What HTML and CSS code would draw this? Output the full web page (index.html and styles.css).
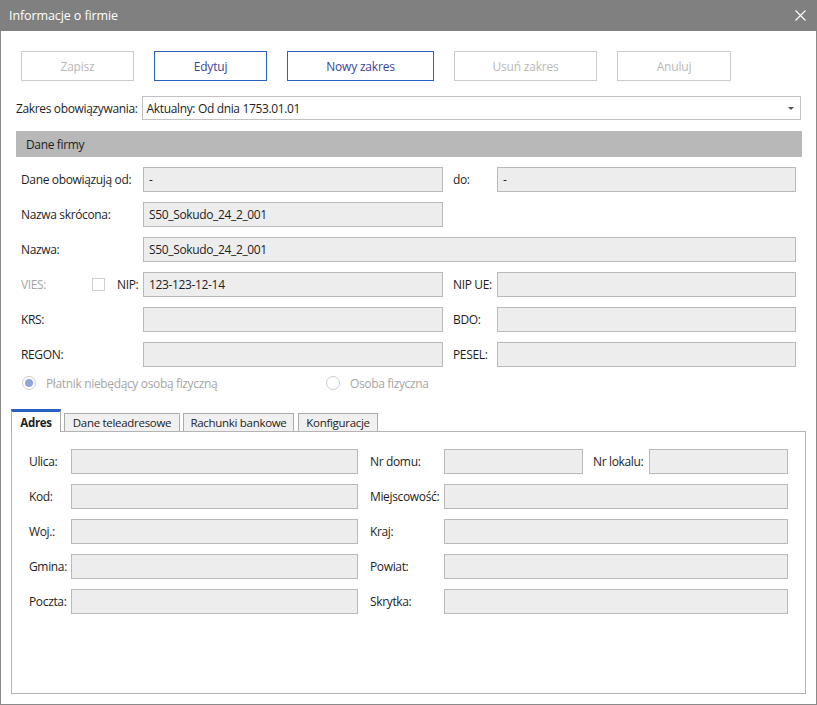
FILE: index.html
```html
<!DOCTYPE html>
<html lang="pl">
<head>
<meta charset="utf-8">
<title>Informacje o firmie</title>
<link rel="stylesheet" href="styles.css">
</head>
<body>
<div class="window">
  <div class="titlebar">
    <span class="title">Informacje o firmie</span>
    <svg class="close" width="11" height="11" viewBox="0 0 11 11"><path d="M0.5 0.5 L10.5 10.5 M10.5 0.5 L0.5 10.5" stroke="#fff" stroke-width="1.1" fill="none"/></svg>
  </div>
  <div class="content">
    <div class="toolbar">
      <button class="btn disabled w113">Zapisz</button>
      <button class="btn active w113">Edytuj</button>
      <button class="btn active w147">Nowy zakres</button>
      <button class="btn disabled w143">Usuń zakres</button>
      <button class="btn disabled w114">Anuluj</button>
    </div>
    <div class="range-row">
      <span class="label">Zakres obowiązywania:</span>
      <div class="select">
        <span>Aktualny: Od dnia 1753.01.01</span>
        <svg class="arrow" width="6" height="3" viewBox="0 0 6 3"><path d="M0 0 H6 L3 3 Z" fill="#505050"/></svg>
      </div>
    </div>
    <div class="section">Dane firmy</div>
    <div class="form">
      <span class="label">Dane obowiązują od:</span>
      <div class="field">-</div>
      <span class="label l2">do:</span>
      <div class="field">-</div>

      <span class="label">Nazwa skrócona:</span>
      <div class="field">S50_Sokudo_24_2_001</div>
      <span></span><span></span>

      <span class="label">Nazwa:</span>
      <div class="field span3">S50_Sokudo_24_2_001</div>

      <div class="nip-cell">
        <span class="label dim vies">VIES:</span>
        <span class="checkbox"></span>
        <span class="label">NIP:</span>
      </div>
      <div class="field">123-123-12-14</div>
      <span class="label l2">NIP UE:</span>
      <div class="field"></div>

      <span class="label">KRS:</span>
      <div class="field"></div>
      <span class="label l2">BDO:</span>
      <div class="field"></div>

      <span class="label">REGON:</span>
      <div class="field"></div>
      <span class="label l2">PESEL:</span>
      <div class="field"></div>
    </div>
    <div class="radios">
      <div class="radio-item first"><span class="radio checked"></span><span class="dim">Płatnik niebędący osobą fizyczną</span></div>
      <div class="radio-item"><span class="radio"></span><span class="dim">Osoba fizyczna</span></div>
    </div>
    <div class="tabs">
      <div class="tab selected">Adres</div>
      <div class="tab t1">Dane teleadresowe</div>
      <div class="tab t2">Rachunki bankowe</div>
      <div class="tab t3">Konfiguracje</div>
    </div>
    <div class="panel">
      <div class="addr">
        <span class="label">Ulica:</span>
        <div class="field"></div>
        <span class="label a2">Nr domu:</span>
        <div class="field"></div>
        <span class="label a3">Nr lokalu:</span>
        <div class="field"></div>

        <span class="label">Kod:</span>
        <div class="field"></div>
        <span class="label a2">Miejscowość:</span>
        <div class="field span3"></div>

        <span class="label">Woj.:</span>
        <div class="field"></div>
        <span class="label a2">Kraj:</span>
        <div class="field span3"></div>

        <span class="label">Gmina:</span>
        <div class="field"></div>
        <span class="label a2">Powiat:</span>
        <div class="field span3"></div>

        <span class="label">Poczta:</span>
        <div class="field"></div>
        <span class="label a2">Skrytka:</span>
        <div class="field span3"></div>
      </div>
    </div>
  </div>
</div>
</body>
</html>
```
FILE: styles.css
```css
* { box-sizing: border-box; }
html, body { margin: 0; padding: 0; background: #fff; }
body {
  font-family: "Open Sans", "Noto Sans", "Liberation Sans", sans-serif;
  font-size: 12px;
  letter-spacing: -0.35px;
  color: #1e1e1e;
}
.window {
  width: 817px;
  height: 705px;
  display: flex;
  flex-direction: column;
}
.titlebar {
  height: 31px;
  background: #808080;
  display: flex;
  align-items: center;
  justify-content: space-between;
  padding: 0 11px 0 9px;
  flex: none;
}
.title { color: #fff; font-size: 12.5px; letter-spacing: -0.1px; }
.close { display: block; margin-top: 0; }
.content {
  flex: 1;
  border: 1px solid #8a8a8a;
  border-top: none;
  display: flex;
  flex-direction: column;
}
.toolbar {
  display: flex;
  gap: 20px;
  margin: 20px 0 0 20px;
}
.btn {
  height: 30px;
  background: #fff;
  font-family: inherit;
  font-size: 12px;
  letter-spacing: -0.2px;
  padding: 0;
  border: 1px solid #c8c8c8;
}
.btn.disabled { color: #b8b8b8; border-color: #cbcbcb; }
.btn.active { color: #3d4494; border-color: #2a5fc4; }
.w113 { width: 113px; }
.w114 { width: 114px; }
.w143 { width: 143px; }
.w147 { width: 147px; }

.range-row {
  display: flex;
  align-items: center;
  margin: 15px 15px 0 15px;
  gap: 4px;
}
.select {
  flex: 1;
  height: 24px;
  border: 1px solid #c2c2c2;
  display: flex;
  align-items: center;
  justify-content: space-between;
  padding: 0 6px 0 4px;
}
.arrow { display: block; }

.section {
  margin: 11px 14px 0 15px;
  height: 26px;
  background: #b8b8b8;
  padding-left: 10px;
  display: flex;
  align-items: center;
}

.label { white-space: nowrap; }
.dim { color: #a6a6a6; }

.form {
  display: grid;
  grid-template-columns: 122px 300px 54px 299px;
  grid-auto-rows: 25px;
  row-gap: 10px;
  margin: 10px 0 0 20px;
  align-items: center;
}
.form .l2 { padding-left: 10px; }
.field {
  height: 25px;
  background: #ededed;
  border: 1px solid #b9b9b9;
  padding-left: 5px;
  display: flex;
  align-items: center;
}
.span3 { grid-column: span 3; }
.nip-cell {
  display: flex;
  align-items: center;
}
.vies { width: 71px; }
.checkbox {
  width: 13px;
  height: 13px;
  border: 1px solid #cfcfcf;
  margin-right: 12px;
}

.radios {
  display: flex;
  align-items: center;
  height: 20px;
  margin: 6px 0 0 21px;
}
.radio-item { display: flex; align-items: center; gap: 10px; }
.radio-item.first { width: 304px; }
.radio {
  width: 14px;
  height: 14px;
  border-radius: 50%;
  border: 1px solid #cdcdcd;
  display: flex;
  align-items: center;
  justify-content: center;
}
.radio.checked::after {
  content: "";
  width: 8px;
  height: 8px;
  border-radius: 50%;
  background: #8ea6e0;
}

.tabs {
  display: flex;
  align-items: flex-end;
  margin: 16px 0 0 10px;
  height: 22px;
  position: relative;
  z-index: 1;
}
.tab {
  height: 18px;
  background: #f0f0f0;
  border: 1px solid #acacac;
  border-bottom: none;
  display: flex;
  align-items: center;
  justify-content: center;
  font-size: 11.5px;
  letter-spacing: -0.3px;
}
.tab.selected {
  width: 50px;
  height: 23px;
  background: #fff;
  border-top: 3px solid #2a5fc4;
  border-left: 1px solid #acacac;
  border-right: 1px solid #acacac;
  font-weight: bold;
  margin-bottom: -1px;
}
.tab.t1 { width: 116px; margin-left: 3px; }
.tab.t2 { width: 111px; margin-left: 3px; }
.tab.t3 { width: 80px; margin-left: 4px; }

.panel {
  margin: 0 10px 10px 10px;
  flex: 1;
  border: 1px solid #b4b4b4;
  padding: 17px 0 0 17px;
}
.addr {
  display: grid;
  grid-template-columns: 42px 287px 86px 139px 66px 139px;
  grid-auto-rows: 25px;
  row-gap: 10px;
  align-items: center;
}
.addr .a2 { padding-left: 12px; }
.addr .a3 { padding-left: 10px; }
```
